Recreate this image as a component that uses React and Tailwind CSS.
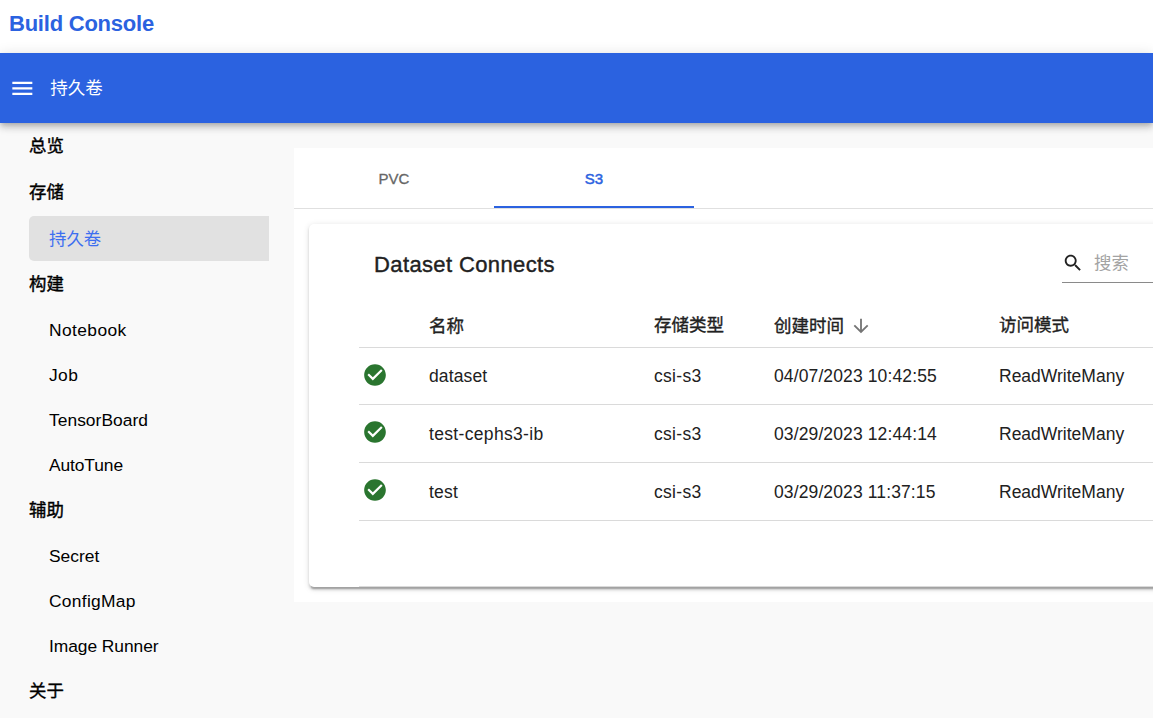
import React from "react";

const latin = "font-['Liberation_Sans','Noto_Sans_CJK_SC',sans-serif]";

const menu = [
  { label: "总览", kind: "lead" },
  { label: "存储", kind: "lead" },
  { label: "持久卷", kind: "active" },
  { label: "构建", kind: "section" },
  { label: "Notebook", kind: "item", tracking: "tracking-[0.4px]" },
  { label: "Job", kind: "item", tracking: "tracking-[0.4px]" },
  { label: "TensorBoard", kind: "item", tracking: "tracking-[0.03px]" },
  { label: "AutoTune", kind: "item", tracking: "tracking-[-0.1px]" },
  { label: "辅助", kind: "section" },
  { label: "Secret", kind: "item", tracking: "tracking-normal" },
  { label: "ConfigMap", kind: "item", tracking: "tracking-[0.3px]" },
  { label: "Image Runner", kind: "item", tracking: "tracking-[-0.06px]" },
  { label: "关于", kind: "section" },
];

const menuStyles = {
  lead: "h-[46px] pb-px [-webkit-text-stroke:0.4px_#000]",
  section: "h-[46px] pt-px [-webkit-text-stroke:0.4px_#000]",
  item: "h-[45px] pl-5 pt-[2px]",
  active: "h-[45px] pl-5 pt-[2px] rounded-l-[5px] bg-[#e1e1e1] text-[#3d6ff0]",
};

const rows = [
  { name: "dataset", type: "csi-s3", time: "04/07/2023 10:42:55", mode: "ReadWriteMany", height: "h-[57px]", iconGap: "mb-[3px]", tracking: "tracking-[0.12px]" },
  { name: "test-cephs3-ib", type: "csi-s3", time: "03/29/2023 12:44:14", mode: "ReadWriteMany", height: "h-[58px] pt-px", iconGap: "mb-1", tracking: "tracking-[0.33px]" },
  { name: "test", type: "csi-s3", time: "03/29/2023 11:37:15", mode: "ReadWriteMany", height: "h-[58px] pt-px", iconGap: "mb-[5px]", tracking: "tracking-[0.2px]" },
];

const columns = "grid grid-cols-[70px_225px_120px_225px_300px] items-center border-b border-[#dadada]";

function Icon({ d, className }) {
  return (
    <svg viewBox="0 0 24 24" fill="currentColor" className={className}>
      <path d={d} />
    </svg>
  );
}

function Sidebar() {
  return (
    <nav className="w-[294px] shrink-0 pl-[29px] pt-px text-black">
      {menu.map((m) => (
        <div
          key={m.label}
          className={`flex w-[240px] items-center text-[17.4px] ${m.tracking ?? ""} ${menuStyles[m.kind]}`}
        >
          {m.label}
        </div>
      ))}
    </nav>
  );
}

function Tabs() {
  return (
    <div className="flex h-[61px] border-b border-[#e0e0e0] text-[15px]">
      <div className="flex w-[200px] items-center justify-center pt-0.5 text-[#666] [-webkit-text-stroke:0.3px_#666]">PVC</div>
      <div className="flex w-[200px] items-center justify-center border-b-2 border-[#2b62e0] pt-1 text-[#2b62e0] [-webkit-text-stroke:0.5px_#2b62e0]">
        S3
      </div>
    </div>
  );
}

function DatasetCard() {
  return (
    <section className="ml-[15px] mt-[15px] h-[363px] w-[1000px] rounded-[5px] bg-white pl-[50px] text-[#212121] shadow-[0_3.75px_1.25px_-2.5px_rgba(0,0,0,0.2),0_2.5px_2.5px_0_rgba(0,0,0,0.14),0_1.25px_6.25px_0_rgba(0,0,0,0.12)]">
      <div className="flex h-[79px] items-center pl-[15px]">
        <h2 className="w-[688px] pt-px text-[22px] tracking-[0.38px] [-webkit-text-stroke:0.4px_#212121]">Dataset Connects</h2>
        <div className="mb-px flex h-[39px] w-[220px] items-center border-b border-[#8a8a8a]">
          <Icon
            className="-ml-[0.5px] size-[22px]"
            d="M15.5 14h-.79l-.28-.27C15.41 12.59 16 11.11 16 9.5 16 5.91 13.09 3 9.5 3S3 5.91 3 9.5 5.91 16 9.5 16c1.61 0 3.09-.59 4.23-1.57l.27.28v.79l5 4.99L20.49 19l-4.99-5zm-6 0C7.01 14 5 11.99 5 9.5S7.01 5 9.5 5 14 7.01 14 9.5 11.99 14 9.5 14z"
          />
          <span className="pl-[10.5px] pt-0.5 text-[17.4px] text-[#a3a3a3]">搜索</span>
        </div>
      </div>
      <div className={`${columns} h-[45px] pt-px text-[17.5px] [-webkit-text-stroke:0.35px_#212121]`}>
        <span />
        <span className="pt-0.5">名称</span>
        <span>存储类型</span>
        <span className="flex items-center pt-0.5">
          创建时间
          <Icon
            className="mb-0.5 ml-[5.5px] size-[22px] text-[#757575]"
            d="M20 12l-1.41-1.41L13 16.17V4h-2v12.17l-5.58-5.59L4 12l8 8 8-8z"
          />
        </span>
        <span>访问模式</span>
      </div>
      {rows.map((r) => (
        <div key={r.name} className={`${columns} ${r.height} text-[17.5px] tracking-[0.12px]`}>
          <Icon
            className={`${r.iconGap} ml-[3px] size-[26px] text-[#2a752f]`}
            d="M12 2C6.48 2 2 6.48 2 12s4.48 10 10 10 10-4.48 10-10S17.52 2 12 2zm-2 15l-5-5 1.41-1.41L10 14.17l7.59-7.59L19 8l-9 9z"
          />
          <span className={r.tracking}>{r.name}</span>
          <span className="tracking-[0.3px]">{r.type}</span>
          <span>{r.time}</span>
          <span className="tracking-normal">{r.mode}</span>
        </div>
      ))}
      <div className="h-[66px] border-b border-[#dadada]" />
    </section>
  );
}

export default function App() {
  return (
    <div className={`${latin} flex h-[718px] w-[1153px] flex-col overflow-hidden bg-[#f9f9f9]`}>
      <div className="flex h-[53px] shrink-0 items-center bg-white pb-[6px] pl-[9px]">
        <h1 className="text-[22px] font-bold tracking-[-0.23px] text-[#2b62e0]">Build Console</h1>
      </div>
      <header className="relative z-10 flex h-[70px] shrink-0 items-center bg-[#2b62e0] pl-[8.67px] text-white shadow-[0_2.5px_5px_-1.25px_rgba(0,0,0,0.2),0_5px_6.25px_0_rgba(0,0,0,0.14),0_1.25px_12.5px_0_rgba(0,0,0,0.12)]">
        <Icon className="size-[26.67px]" d="M3 18h18v-2H3v2zm0-5h18v-2H3v2zm0-7v2h18V6H3z" />
        <span className="pl-[15px] text-[17.5px]">持久卷</span>
      </header>
      <div className="flex min-h-0 grow">
        <Sidebar />
        <main className="mt-[25px] h-[454px] w-[859px] overflow-hidden bg-white">
          <Tabs />
          <DatasetCard />
        </main>
      </div>
    </div>
  );
}
